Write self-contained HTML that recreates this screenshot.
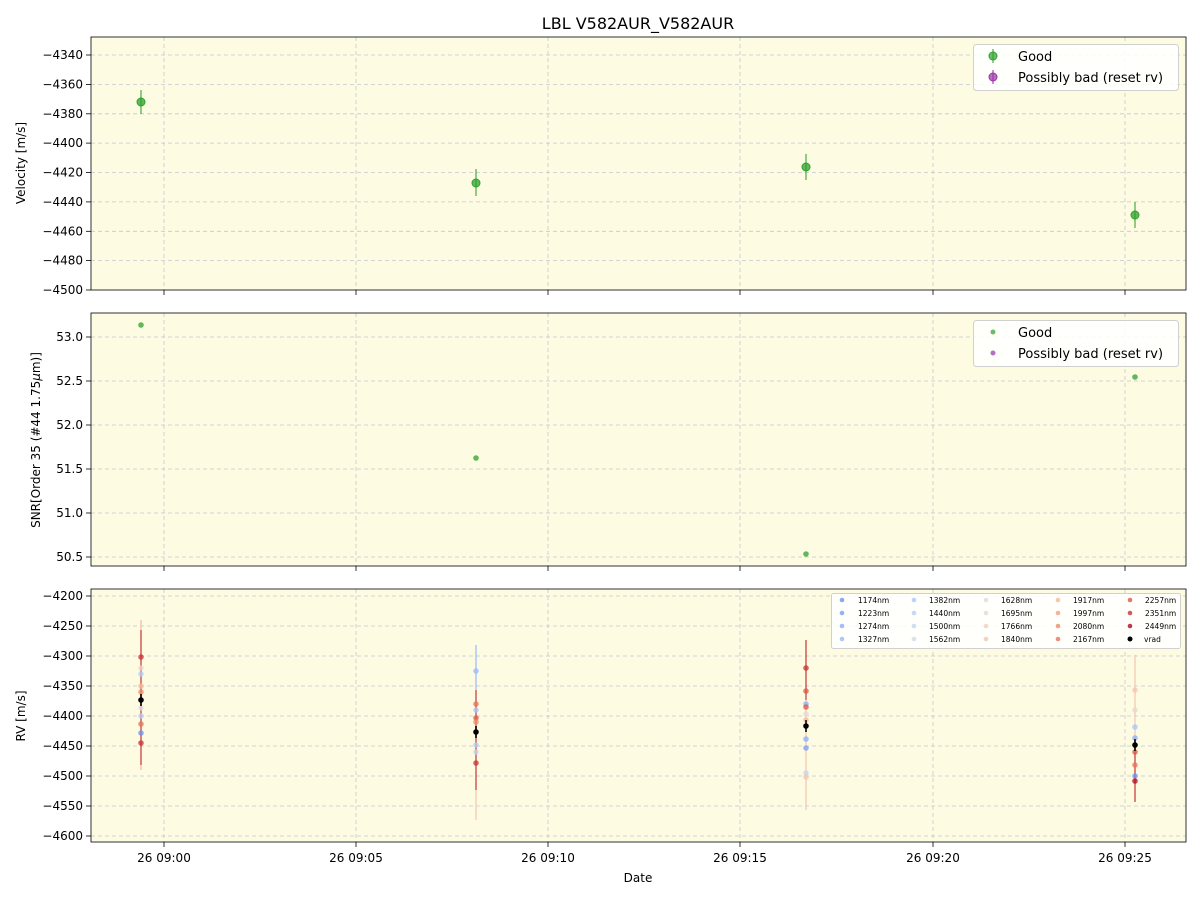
<!DOCTYPE html>
<html><head><meta charset="utf-8"><style>
html,body{margin:0;padding:0;background:#fff;}
svg{display:block;font-family:"DejaVu Sans","Liberation Sans",sans-serif;}
.g{stroke:#b8b8cc;stroke-width:0.8;stroke-dasharray:4,3;opacity:0.8}
.t{font-size:12px;fill:#000}
</style></head><body>
<svg width="1200" height="900" viewBox="0 0 1200 900" xmlns="http://www.w3.org/2000/svg">
<rect width="1200" height="900" fill="#fff"/>
<text x="638" y="29" text-anchor="middle" font-size="16">LBL V582AUR_V582AUR</text>

<!-- Panel 1 -->
<rect x="91" y="37" width="1095" height="253" fill="#fdfce2"/>
<g class="g">
<line x1="164" y1="37" x2="164" y2="290"/><line x1="356" y1="37" x2="356" y2="290"/><line x1="548" y1="37" x2="548" y2="290"/><line x1="740" y1="37" x2="740" y2="290"/><line x1="933" y1="37" x2="933" y2="290"/><line x1="1125" y1="37" x2="1125" y2="290"/>
<line x1="91" y1="55" x2="1186" y2="55"/><line x1="91" y1="84.4" x2="1186" y2="84.4"/><line x1="91" y1="113.8" x2="1186" y2="113.8"/><line x1="91" y1="143.1" x2="1186" y2="143.1"/><line x1="91" y1="172.5" x2="1186" y2="172.5"/><line x1="91" y1="201.9" x2="1186" y2="201.9"/><line x1="91" y1="231.3" x2="1186" y2="231.3"/><line x1="91" y1="260.6" x2="1186" y2="260.6"/>
</g>
<g stroke="#2ca02c" stroke-width="1.5" opacity="0.7">
<line x1="141" y1="90" x2="141" y2="114"/><line x1="476" y1="169" x2="476" y2="196"/><line x1="806" y1="154" x2="806" y2="180"/><line x1="1135" y1="202" x2="1135" y2="228"/>
</g>
<g fill="#2ca02c" fill-opacity="0.75" stroke="#2ca02c">
<circle cx="141" cy="102" r="4"/><circle cx="476" cy="183" r="4"/><circle cx="806" cy="167" r="4"/><circle cx="1135" cy="215" r="4"/>
</g>
<rect x="91" y="37" width="1095" height="253" fill="none" stroke="#000" stroke-width="0.8"/>
<g stroke="#000" stroke-width="0.8">
<line x1="86" y1="55" x2="91" y2="55"/><line x1="86" y1="84.4" x2="91" y2="84.4"/><line x1="86" y1="113.8" x2="91" y2="113.8"/><line x1="86" y1="143.1" x2="91" y2="143.1"/><line x1="86" y1="172.5" x2="91" y2="172.5"/><line x1="86" y1="201.9" x2="91" y2="201.9"/><line x1="86" y1="231.3" x2="91" y2="231.3"/><line x1="86" y1="260.6" x2="91" y2="260.6"/><line x1="86" y1="290" x2="91" y2="290"/>
<line x1="164" y1="290" x2="164" y2="295"/><line x1="356" y1="290" x2="356" y2="295"/><line x1="548" y1="290" x2="548" y2="295"/><line x1="740" y1="290" x2="740" y2="295"/><line x1="933" y1="290" x2="933" y2="295"/><line x1="1125" y1="290" x2="1125" y2="295"/>
</g>
<g class="t" text-anchor="end">
<text x="83" y="59">−4340</text><text x="83" y="88.4">−4360</text><text x="83" y="117.8">−4380</text><text x="83" y="147.1">−4400</text><text x="83" y="176.5">−4420</text><text x="83" y="205.9">−4440</text><text x="83" y="235.3">−4460</text><text x="83" y="264.6">−4480</text><text x="83" y="294">−4500</text>
</g>
<text transform="translate(25,163) rotate(-90)" text-anchor="middle" class="t">Velocity [m/s]</text>
<rect x="973.5" y="44.5" width="205" height="46" rx="3" fill="#fff" fill-opacity="0.85" stroke="#d0d0d0"/>
<line x1="993" y1="49" x2="993" y2="63" stroke="#2ca02c" stroke-width="1.5" opacity="0.7"/><circle cx="993" cy="56" r="4" fill="#2ca02c" fill-opacity="0.7" stroke="#2ca02c"/>
<line x1="993" y1="70" x2="993" y2="84" stroke="#9932a8" stroke-width="1.5" opacity="0.7"/><circle cx="993" cy="77" r="4" fill="#9932a8" fill-opacity="0.7" stroke="#9932a8"/>
<text x="1018" y="61" font-size="13">Good</text><text x="1018" y="82" font-size="13">Possibly bad (reset rv)</text>

<!-- Panel 2 -->
<rect x="91" y="313" width="1095" height="253" fill="#fdfce2"/>
<g class="g">
<line x1="164" y1="313" x2="164" y2="566"/><line x1="356" y1="313" x2="356" y2="566"/><line x1="548" y1="313" x2="548" y2="566"/><line x1="740" y1="313" x2="740" y2="566"/><line x1="933" y1="313" x2="933" y2="566"/><line x1="1125" y1="313" x2="1125" y2="566"/>
<line x1="91" y1="337" x2="1186" y2="337"/><line x1="91" y1="381" x2="1186" y2="381"/><line x1="91" y1="425" x2="1186" y2="425"/><line x1="91" y1="469" x2="1186" y2="469"/><line x1="91" y1="513" x2="1186" y2="513"/><line x1="91" y1="557" x2="1186" y2="557"/>
</g>
<g fill="#2ca02c" fill-opacity="0.75"><circle cx="141" cy="325" r="2.8"/><circle cx="476" cy="458" r="2.8"/><circle cx="806" cy="554" r="2.8"/><circle cx="1135" cy="377" r="2.8"/></g>
<rect x="91" y="313" width="1095" height="253" fill="none" stroke="#000" stroke-width="0.8"/>
<g stroke="#000" stroke-width="0.8">
<line x1="86" y1="337" x2="91" y2="337"/><line x1="86" y1="381" x2="91" y2="381"/><line x1="86" y1="425" x2="91" y2="425"/><line x1="86" y1="469" x2="91" y2="469"/><line x1="86" y1="513" x2="91" y2="513"/><line x1="86" y1="557" x2="91" y2="557"/>
<line x1="164" y1="566" x2="164" y2="571"/><line x1="356" y1="566" x2="356" y2="571"/><line x1="548" y1="566" x2="548" y2="571"/><line x1="740" y1="566" x2="740" y2="571"/><line x1="933" y1="566" x2="933" y2="571"/><line x1="1125" y1="566" x2="1125" y2="571"/>
</g>
<g class="t" text-anchor="end">
<text x="83" y="341">53.0</text><text x="83" y="385">52.5</text><text x="83" y="429">52.0</text><text x="83" y="473">51.5</text><text x="83" y="517">51.0</text><text x="83" y="561">50.5</text>
</g>
<text transform="translate(40,440) rotate(-90)" text-anchor="middle" class="t">SNR[Order 35 (#44 1.75<tspan font-style="italic">μ</tspan>m)]</text>
<rect x="973.5" y="320.5" width="205" height="46" rx="3" fill="#fff" fill-opacity="0.85" stroke="#d0d0d0"/>
<circle cx="993" cy="332" r="2.5" fill="#2ca02c" fill-opacity="0.7"/><circle cx="993" cy="353" r="2.5" fill="#9932a8" fill-opacity="0.7"/>
<text x="1018" y="337" font-size="13">Good</text><text x="1018" y="358" font-size="13">Possibly bad (reset rv)</text>

<!-- Panel 3 -->
<rect x="91" y="589" width="1095" height="253" fill="#fdfce2"/>
<g class="g">
<line x1="164" y1="589" x2="164" y2="842"/><line x1="356" y1="589" x2="356" y2="842"/><line x1="548" y1="589" x2="548" y2="842"/><line x1="740" y1="589" x2="740" y2="842"/><line x1="933" y1="589" x2="933" y2="842"/><line x1="1125" y1="589" x2="1125" y2="842"/>
<line x1="91" y1="596" x2="1186" y2="596"/><line x1="91" y1="626" x2="1186" y2="626"/><line x1="91" y1="656" x2="1186" y2="656"/><line x1="91" y1="686" x2="1186" y2="686"/><line x1="91" y1="716" x2="1186" y2="716"/><line x1="91" y1="746" x2="1186" y2="746"/><line x1="91" y1="776" x2="1186" y2="776"/><line x1="91" y1="806" x2="1186" y2="806"/><line x1="91" y1="836" x2="1186" y2="836"/>
</g>
<g stroke-width="2" opacity="0.6">
<line x1="141" y1="620" x2="141" y2="770" stroke="#f6b89c"/>
<line x1="141" y1="630" x2="141" y2="765" stroke="#c53334"/>
<line x1="476" y1="645" x2="476" y2="760" stroke="#98b9ff"/>
<line x1="476" y1="690" x2="476" y2="820" stroke="#f3c7b1"/>
<line x1="476" y1="690" x2="476" y2="790" stroke="#c53334"/>
<line x1="806" y1="640" x2="806" y2="740" stroke="#c53334"/>
<line x1="806" y1="700" x2="806" y2="810" stroke="#f3c7b1"/>
<line x1="1135" y1="655" x2="1135" y2="760" stroke="#f3c7b1"/>
<line x1="1135" y1="740" x2="1135" y2="802" stroke="#c53334"/>
</g>
<g fill-opacity="0.75">
<circle cx="141" cy="657" r="2.8" fill="#c53334"/><circle cx="141" cy="668" r="2.8" fill="#e5d8d1"/><circle cx="141" cy="674" r="2.8" fill="#b6cefa"/><circle cx="141" cy="686" r="2.8" fill="#f6b89c"/><circle cx="141" cy="692" r="2.8" fill="#f08b6e"/><circle cx="141" cy="708" r="2.8" fill="#dcdddd"/><circle cx="141" cy="716" r="2.8" fill="#b6cefa"/><circle cx="141" cy="724" r="2.8" fill="#e67459"/><circle cx="141" cy="733" r="2.8" fill="#6f92f3"/><circle cx="141" cy="743" r="2.8" fill="#c53334"/>
<circle cx="476" cy="671" r="2.8" fill="#98b9ff"/><circle cx="476" cy="704" r="2.8" fill="#e67459"/><circle cx="476" cy="710" r="2.8" fill="#a7c5fe"/><circle cx="476" cy="718" r="2.8" fill="#d95847"/><circle cx="476" cy="722" r="2.8" fill="#f08b6e"/><circle cx="476" cy="745" r="2.8" fill="#b6cefa"/><circle cx="476" cy="752" r="2.8" fill="#c3d5f4"/><circle cx="476" cy="763" r="2.8" fill="#c53334"/>
<circle cx="806" cy="668" r="2.8" fill="#c53334"/><circle cx="806" cy="691" r="2.8" fill="#d95847"/><circle cx="806" cy="704" r="2.8" fill="#89acfd"/><circle cx="806" cy="707" r="2.8" fill="#d95847"/><circle cx="806" cy="714" r="2.8" fill="#e5d8d1"/><circle cx="806" cy="720" r="2.8" fill="#f6b89c"/><circle cx="806" cy="739" r="2.8" fill="#89acfd"/><circle cx="806" cy="748" r="2.8" fill="#7b9ff9"/><circle cx="806" cy="773" r="2.8" fill="#c3d5f4"/><circle cx="806" cy="777" r="2.8" fill="#f3c7b1"/>
<circle cx="1135" cy="690" r="2.8" fill="#f3c7b1"/><circle cx="1135" cy="710" r="2.8" fill="#e5d8d1"/><circle cx="1135" cy="727" r="2.8" fill="#a7c5fe"/><circle cx="1135" cy="738" r="2.8" fill="#89acfd"/><circle cx="1135" cy="752" r="2.8" fill="#d95847"/><circle cx="1135" cy="765" r="2.8" fill="#e67459"/><circle cx="1135" cy="776" r="2.8" fill="#6f92f3"/><circle cx="1135" cy="781" r="2.8" fill="#b40426"/>
</g>
<g stroke="#000" stroke-width="1.5"><line x1="141" y1="694" x2="141" y2="706"/><line x1="476" y1="726" x2="476" y2="738"/><line x1="806" y1="720" x2="806" y2="732"/><line x1="1135" y1="739" x2="1135" y2="751"/></g>
<g fill="#000"><circle cx="141" cy="700" r="2.8"/><circle cx="476" cy="732" r="2.8"/><circle cx="806" cy="726" r="2.8"/><circle cx="1135" cy="745" r="2.8"/></g>
<rect x="91" y="589" width="1095" height="253" fill="none" stroke="#000" stroke-width="0.8"/>
<g stroke="#000" stroke-width="0.8">
<line x1="86" y1="596" x2="91" y2="596"/><line x1="86" y1="626" x2="91" y2="626"/><line x1="86" y1="656" x2="91" y2="656"/><line x1="86" y1="686" x2="91" y2="686"/><line x1="86" y1="716" x2="91" y2="716"/><line x1="86" y1="746" x2="91" y2="746"/><line x1="86" y1="776" x2="91" y2="776"/><line x1="86" y1="806" x2="91" y2="806"/><line x1="86" y1="836" x2="91" y2="836"/>
<line x1="164" y1="842" x2="164" y2="847"/><line x1="356" y1="842" x2="356" y2="847"/><line x1="548" y1="842" x2="548" y2="847"/><line x1="740" y1="842" x2="740" y2="847"/><line x1="933" y1="842" x2="933" y2="847"/><line x1="1125" y1="842" x2="1125" y2="847"/>
</g>
<g class="t" text-anchor="end">
<text x="83" y="600">−4200</text><text x="83" y="630">−4250</text><text x="83" y="660">−4300</text><text x="83" y="690">−4350</text><text x="83" y="720">−4400</text><text x="83" y="750">−4450</text><text x="83" y="780">−4500</text><text x="83" y="810">−4550</text><text x="83" y="840">−4600</text>
</g>
<g class="t" text-anchor="middle">
<text x="164" y="862">26 09:00</text><text x="356" y="862">26 09:05</text><text x="548" y="862">26 09:10</text><text x="740" y="862">26 09:15</text><text x="933" y="862">26 09:20</text><text x="1125" y="862">26 09:25</text>
</g>
<text x="638" y="882" text-anchor="middle" class="t">Date</text>
<text transform="translate(25,716) rotate(-90)" text-anchor="middle" class="t">RV [m/s]</text>

<rect x="831.5" y="593.5" width="349" height="55" rx="2" fill="#fff" fill-opacity="0.85" stroke="#d0d0d0"/>
<g font-size="7.5" fill="#000">
<g fill-opacity="0.8">
<circle cx="842" cy="600" r="2.3" fill="#6f92f3"/><circle cx="842" cy="613" r="2.3" fill="#7b9ff9"/><circle cx="842" cy="626" r="2.3" fill="#89acfd"/><circle cx="842" cy="639" r="2.3" fill="#98b9ff"/>
<circle cx="914" cy="600" r="2.3" fill="#a7c5fe"/><circle cx="914" cy="613" r="2.3" fill="#b6cefa"/><circle cx="914" cy="626" r="2.3" fill="#c3d5f4"/><circle cx="914" cy="639" r="2.3" fill="#d0dbee"/>
<circle cx="986" cy="600" r="2.3" fill="#dcdddd"/><circle cx="986" cy="613" r="2.3" fill="#e5d8d1"/><circle cx="986" cy="626" r="2.3" fill="#eecfbf"/><circle cx="986" cy="639" r="2.3" fill="#f3c7b1"/>
<circle cx="1058" cy="600" r="2.3" fill="#f6b89c"/><circle cx="1058" cy="613" r="2.3" fill="#f5a081"/><circle cx="1058" cy="626" r="2.3" fill="#f08b6e"/><circle cx="1058" cy="639" r="2.3" fill="#e67459"/>
<circle cx="1130" cy="600" r="2.3" fill="#d95847"/><circle cx="1130" cy="613" r="2.3" fill="#c53334"/><circle cx="1130" cy="626" r="2.3" fill="#b40426"/><circle cx="1130" cy="639" r="2.5" fill="#000" fill-opacity="1"/>
</g>
<text x="858" y="603">1174nm</text><text x="858" y="616">1223nm</text><text x="858" y="629">1274nm</text><text x="858" y="642">1327nm</text>
<text x="929" y="603">1382nm</text><text x="929" y="616">1440nm</text><text x="929" y="629">1500nm</text><text x="929" y="642">1562nm</text>
<text x="1001" y="603">1628nm</text><text x="1001" y="616">1695nm</text><text x="1001" y="629">1766nm</text><text x="1001" y="642">1840nm</text>
<text x="1073" y="603">1917nm</text><text x="1073" y="616">1997nm</text><text x="1073" y="629">2080nm</text><text x="1073" y="642">2167nm</text>
<text x="1145" y="603">2257nm</text><text x="1145" y="616">2351nm</text><text x="1145" y="629">2449nm</text><text x="1144" y="642">vrad</text>
</g>
</svg>
</body></html>
